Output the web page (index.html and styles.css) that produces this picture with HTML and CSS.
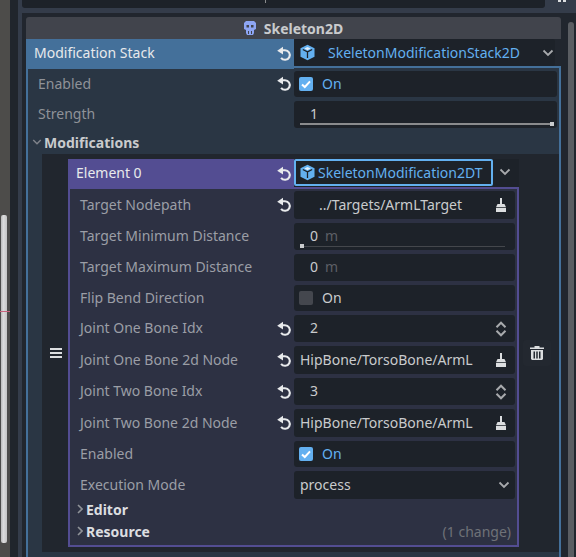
FILE: index.html
```html
<!DOCTYPE html>
<html>
  <head>
    <meta name="viewport" content="width=device-width,initial-scale=1.0" />
    <title>Skeleton2D inspector</title>
    <link rel="stylesheet" href="styles.css">
  </head>
  <body>
    <svg class="defs" width="0" height="0">
      <symbol id="revert" viewBox="0 0 16 16">
        <path d="M6.500 4.200h2.500a4.800 4.800 0 1 1-3.900 7.600" fill="none" stroke="currentColor" stroke-width="2.100"/>
        <path d="M7 .8 1.200 4.800 7 8.600z" fill="currentColor"/>
      </symbol>
      <symbol id="cube" viewBox="0 0 16 16">
        <path d="M8 .8 14.600 4v8L8 15.200 1.400 12V4z" fill="#63b0f0"/>
        <path d="M3.600 5.200 8 7.400v5.800M12.400 5.200 8 7.400" fill="none" stroke="#1d2229" stroke-width="1.200"/>
        <path d="M8 2.800 11 4.300 8 5.800 5 4.300z" fill="#dfeffc"/>
      </symbol>
      <symbol id="check" viewBox="0 0 14 14">
        <rect width="14" height="14" rx="2" fill="#63b0f0"/>
        <path d="M3 7.400 5.800 10 11 4.400" fill="none" stroke="#fff" stroke-width="2"/>
      </symbol>
      <symbol id="broom" viewBox="0 0 12 14">
        <path d="M5 0h2v6H5z" fill="#dcdee0"/>
        <path d="M2.500 6h7L11 9.300H1z" fill="#dcdee0"/>
        <path d="M1 10h10v4H1z" fill="#dcdee0"/>
      </symbol>
      <symbol id="spin" viewBox="0 0 12 16">
        <path d="M1.500 6.300 6 1.700 10.500 6.300M1.500 9.700 6 14.300 10.500 9.700" fill="none" stroke="#a8aaad" stroke-width="2"/>
      </symbol>
      <symbol id="chev" viewBox="0 0 12 12">
        <path d="M1.500 3.500 6 8l4.500-4.500" fill="none" stroke="currentColor" stroke-width="1.800"/>
      </symbol>
    </svg>

    <div class="page">
      <div class="track">
        <div class="grabber"></div>
        <div class="tick"></div>
      </div>
      <div class="dock"></div>
      <div class="main">
        <div class="topbar">
          <div class="toptab"><i></i></div>
          <div class="marks"><i></i><i></i></div>
        </div>
        <div class="inspector">
          <div class="body">
            <div class="title">
              <svg class="skull" viewBox="0 0 12 14">
                <path d="M2 0h8l2 2v6l-2 1v3l-1 2H3l-1-2V9L0 8V2z" fill="#8da5f3"/>
                <path d="M2.500 4h2.500v2.500H2.500zM7 4h2.500v2.500H7zM4 10h1v3H4zM7 10h1v3H7z" fill="#41444c"/>
              </svg>
              <span>Skeleton2D</span>
            </div>

            <div class="head">
              <div class="head-label blue-bar">
                <span>Modification Stack</span>
                <svg class="revert"><use href="#revert"/></svg>
              </div>
              <div class="head-side blue-line">
                <div class="editor wide res-editor">
                  <svg class="cube"><use href="#cube"/></svg>
                  <span class="blue res-name">SkeletonModificationStack2D</span>
                  <svg class="chev"><use href="#chev"/></svg>
                </div>
              </div>
            </div>

            <div class="stack">
              <div class="row h26 first">
                <div class="label">Enabled</div>
                <svg class="revert"><use href="#revert"/></svg>
                <div class="editor">
                  <svg class="box"><use href="#check"/></svg>
                  <span class="blue on">On</span>
                </div>
              </div>
              <div class="row h27">
                <div class="label">Strength</div>
                <div class="editor num">
                  <span>1</span>
                  <div class="slider full"><i></i></div>
                </div>
              </div>

              <div class="section">
                <svg class="sec-chev"><use href="#chev"/></svg>
                <b>Modifications</b>
              </div>

              <div class="nested">
                <div class="handle">
                  <div class="burger"><i></i><i></i><i></i></div>
                </div>

                <div class="element">
                  <div class="head el-head">
                    <div class="head-label purple-bar">
                      <span>Element 0</span>
                      <svg class="revert"><use href="#revert"/></svg>
                    </div>
                    <div class="head-side purple-line">
                      <div class="editor focused">
                        <svg class="cube"><use href="#cube"/></svg>
                        <span class="blue">SkeletonModification2DT</span>
                      </div>
                      <svg class="chev el-chev"><use href="#chev"/></svg>
                    </div>
                  </div>

                  <div class="props">
                    <div class="row h28">
                      <div class="label">Target Nodepath</div>
                      <svg class="revert"><use href="#revert"/></svg>
                      <div class="editor path">
                        <span class="indent">../Targets/ArmLTarget</span>
                        <svg class="broom"><use href="#broom"/></svg>
                      </div>
                    </div>
                    <div class="row h27">
                      <div class="label">Target Minimum Distance</div>
                      <div class="editor num">
                        <span>0</span><em>m</em>
                        <div class="slider empty"><i></i></div>
                      </div>
                    </div>
                    <div class="row h27">
                      <div class="label">Target Maximum Distance</div>
                      <div class="editor num"><span>0</span><em>m</em></div>
                    </div>
                    <div class="row h26">
                      <div class="label">Flip Bend Direction</div>
                      <div class="editor">
                        <div class="box unchecked"></div>
                        <span class="on">On</span>
                      </div>
                    </div>
                    <div class="row h27">
                      <div class="label">Joint One Bone Idx</div>
                      <svg class="revert"><use href="#revert"/></svg>
                      <div class="editor num spinbox">
                        <span>2</span>
                        <svg class="spin"><use href="#spin"/></svg>
                      </div>
                    </div>
                    <div class="row h28">
                      <div class="label">Joint One Bone 2d Node</div>
                      <svg class="revert"><use href="#revert"/></svg>
                      <div class="editor path">
                        <span>HipBone/TorsoBone/ArmL</span>
                        <svg class="broom"><use href="#broom"/></svg>
                      </div>
                    </div>
                    <div class="row h27">
                      <div class="label">Joint Two Bone Idx</div>
                      <svg class="revert"><use href="#revert"/></svg>
                      <div class="editor num spinbox">
                        <span>3</span>
                        <svg class="spin"><use href="#spin"/></svg>
                      </div>
                    </div>
                    <div class="row h28">
                      <div class="label">Joint Two Bone 2d Node</div>
                      <svg class="revert"><use href="#revert"/></svg>
                      <div class="editor path">
                        <span>HipBone/TorsoBone/ArmL</span>
                        <svg class="broom"><use href="#broom"/></svg>
                      </div>
                    </div>
                    <div class="row h26">
                      <div class="label">Enabled</div>
                      <div class="editor">
                        <svg class="box"><use href="#check"/></svg>
                        <span class="blue on">On</span>
                      </div>
                    </div>
                    <div class="row h28">
                      <div class="label">Execution Mode</div>
                      <div class="editor path">
                        <span>process</span>
                        <svg class="chev select-chev"><use href="#chev"/></svg>
                      </div>
                    </div>
                  </div>

                  <div class="group first-group">
                    <svg class="sec-arrow" viewBox="0 0 6 10"><path d="M1 1l4 4-4 4" fill="none" stroke="#8f9298" stroke-width="1.600"/></svg>
                    <b>Editor</b>
                  </div>
                  <div class="group last-group">
                    <svg class="sec-arrow" viewBox="0 0 6 10"><path d="M1 1l4 4-4 4" fill="none" stroke="#8f9298" stroke-width="1.600"/></svg>
                    <b>Resource</b>
                    <span class="changes">(1 change)</span>
                  </div>
                </div>

                <div class="side">
                  <div class="trash-btn">
                    <svg class="trash" viewBox="0 0 14 14">
                      <path d="M4.500 0h5v1.500h4.500V3H0V1.500h4.500zM1 4h12v9l-1 1H2l-1-1zM3.500 5.500V12.500h1.500V5.500zM6.250 5.500V12.500h1.500V5.500zM9 5.500V12.500h1.500V5.500z" fill="#dcdee0" fill-rule="evenodd"/>
                    </svg>
                  </div>
                </div>
              </div>
            </div>
          </div>
          <div class="scrollbar"><div class="bar"></div></div>
        </div>
      </div>
    </div>
  </body>
</html>
```

FILE: styles.css
```css
body {
  margin: 0;
  background: #21262e;
  font-family: "Noto Sans", sans-serif;
  font-size: 14px;
  color: #c9cbcd;
  overflow: hidden;
}
b {
  font-weight: 700;
}
.defs {
  position: absolute;
}

.page {
  display: flex;
  height: 557px;
  overflow: hidden;
}
.track {
  position: relative;
  width: 10px;
  padding: 215px 3px 0 1px;
  box-sizing: border-box;
  background: #4d4c4a;
}
.grabber {
  height: 328px;
  border-radius: 2px;
  background: linear-gradient(90deg, #b9b9b9, #dcdcdc 40%, #c4c4c4);
}
.tick {
  position: absolute;
  left: 0;
  top: 311px;
  width: 10px;
  height: 1px;
  background: #c9637c;
}
.dock {
  width: 8px;
  background: #20252c;
}
.main {
  flex: 1;
  display: flex;
  flex-direction: column;
  padding-left: 4px;
  background: #343c4a;
}
.topbar {
  height: 8px;
  flex: none;
  display: flex;
  margin-bottom: 5px;
}
.toptab {
  flex: 1;
  padding-left: 243px;
  box-sizing: border-box;
  border-radius: 0 0 3px 3px;
  background: #1d2229;
}
.toptab i {
  display: block;
  width: 1px;
  height: 3px;
  background: #8a8b8d;
}
.marks {
  width: 31px;
  flex: none;
  display: flex;
  gap: 2px;
  padding-left: 13px;
  box-sizing: border-box;
}
.marks i {
  width: 3px;
  height: 2px;
  background: #dcdee0;
}
.inspector {
  flex: 1;
  display: flex;
  background: #21262e;
}
.body {
  width: 535px;
  flex: none;
  margin-left: 4px;
  padding-top: 4px;
}
.scrollbar {
  flex: 1;
  padding: 9px 2px 0 7px;
}
.bar {
  height: 540px;
  border-radius: 3px;
  background: #5a5d62;
}

.title {
  height: 22px;
  display: flex;
  align-items: center;
  justify-content: center;
  gap: 8px;
  border-radius: 3px 3px 0 0;
  background: #41444c;
  font-weight: 700;
  color: #c9cbcd;
}
.skull {
  width: 12px;
  height: 14px;
}

.head {
  display: flex;
  height: 30px;
}
.head-label {
  width: 268px;
  flex: none;
  display: flex;
  align-items: center;
  justify-content: space-between;
  padding: 0 2px 0 8px;
  box-sizing: border-box;
  color: #e8eaec;
}
.head-label span {
  padding-bottom: 4px;
}
.blue-bar {
  background: #44709a;
}
.purple-bar {
  background: #534d92;
}
.head-side {
  flex: 1;
  height: 29px;
  display: flex;
  box-sizing: border-box;
}
.blue-line {
  border-bottom: 2px solid #44709a;
}
.purple-line {
  height: 30px;
  align-items: flex-start;
  border-bottom: 2px solid #534d92;
  background: #1d2229;
}

.stack {
  border: solid #44709a;
  border-width: 0 2px;
  background: #2a3644;
  padding-top: 3px;
  margin-top: -1px;
  height: 490px;
}
.row {
  display: flex;
  align-items: center;
  margin-bottom: 4px;
  padding-right: 2px;
}
.h26 {
  height: 26px;
}
.h27 {
  height: 27px;
}
.h28 {
  height: 28px;
}
.label {
  flex: 1;
  padding: 0 0 2px 10px;
  color: #8f9298;
}
.props .label {
  color: #9b9ea6;
}
.revert {
  width: 16px;
  height: 16px;
  flex: none;
  margin-right: 2px;
  color: #e8eaec;
}
.head-label .revert {
  margin-right: 0;
}

.editor {
  position: relative;
  width: 221px;
  height: 100%;
  flex: none;
  display: flex;
  align-items: center;
  padding: 0 6px 0 5px;
  box-sizing: border-box;
  border-radius: 3px;
  background: #1d2229;
}
.editor span,
.editor em {
  padding-bottom: 2px;
}
.stack > .row .editor {
  width: 263px;
}
.wide {
  height: 27px;
  padding-right: 2px;
}
.res-editor {
  width: 261px;
}
.editor .res-name {
  margin-left: 12px;
  flex: 1;
  padding-bottom: 0;
}
.blue {
  color: #63b0f0;
}
.cube {
  width: 17px;
  height: 17px;
  flex: none;
}
.chev {
  width: 12px;
  height: 12px;
  flex: none;
  margin-right: 1px;
  color: #a8aaad;
}
.res-editor .chev {
  margin-right: -1px;
}
.select-chev {
  margin-right: -1px;
}
.box {
  width: 14px;
  height: 14px;
  flex: none;
}
.unchecked {
  border-radius: 2px;
  background: #44474e;
}
.on {
  margin-left: 9px;
}
.num > span {
  margin-left: 11px;
}
.num em {
  margin-left: 7px;
  font-style: normal;
  color: #5c5f65;
}
.path {
  justify-content: space-between;
  padding-left: 6px;
}
.spinbox {
  justify-content: space-between;
}
.indent {
  margin-left: 19px;
}
.broom {
  width: 12px;
  height: 14px;
  flex: none;
  margin-right: 2px;
}
.spin {
  width: 12px;
  height: 16px;
  flex: none;
  margin-right: 2px;
}
.slider {
  position: absolute;
  left: 6px;
  bottom: 3px;
  height: 1px;
}
.slider i {
  position: absolute;
  top: -1px;
  width: 4px;
  height: 4px;
}
.full {
  right: 4px;
  height: 2px;
  background: #8a8b8d;
}
.full i {
  right: -1px;
  background: #c9cbcd;
}
.empty {
  right: 10px;
  height: 1px;
  background: #44474c;
}
.empty i {
  left: 0;
  top: -2px;
  background: #c9cbcd;
}

.section {
  height: 26px;
  display: flex;
  align-items: center;
  padding: 2px 0 0 4px;
  margin-top: -4px;
  box-sizing: border-box;
  color: #c9cbcd;
}
.sec-chev {
  width: 10px;
  height: 10px;
  margin-right: 2px;
  color: #7f828a;
}

.nested {
  display: flex;
  align-items: flex-start;
  width: 517px;
  margin-left: 14px;
  padding-top: 5px;
  height: 398px;
  box-sizing: border-box;
  background: #21262e;
}
.handle {
  width: 26px;
  height: 388px;
  flex: none;
  display: flex;
  align-items: center;
  justify-content: center;
  padding-left: 2px;
  box-sizing: border-box;
}
.burger i {
  display: block;
  width: 12px;
  height: 2px;
  margin: 2px 0;
  background: #dcdee0;
}
.element {
  width: 451px;
  height: 388px;
  flex: none;
}
.el-head {
  height: 30px;
}
.el-head .head-label {
  width: 226px;
  padding-left: 8px;
}
.focused {
  width: 199px;
  height: 27px;
  padding: 0 3px;
  gap: 3px;
  border-radius: 2px;
  border: 2px solid #63b0f0;
}
.editor.focused span {
  padding-bottom: 0;
  margin-left: -1px;
}
.el-chev {
  margin: 7px 0 0 6px;
}
.props {
  height: 310px;
  border: solid #534d92;
  border-width: 0 2px;
  padding-top: 2px;
  box-sizing: border-box;
  background: #2d3143;
}
.group {
  display: flex;
  align-items: center;
  padding: 0 6px 0 7px;
  border: solid #534d92;
  border-width: 0 2px;
  background: #2d3143;
  color: #dcdee0;
}
.first-group {
  height: 20px;
  padding-bottom: 2px;
}
.last-group {
  height: 20px;
  padding-bottom: 4px;
  border-bottom-width: 2px;
}
.sec-arrow {
  width: 6px;
  height: 10px;
  margin-right: 3px;
}
.changes {
  margin-left: auto;
  color: #6f7278;
}
.side {
  flex: 1;
  height: 388px;
  display: flex;
  align-items: center;
  justify-content: center;
  padding-right: 4px;
}
.trash-btn {
  width: 28px;
  height: 26px;
  display: flex;
  align-items: center;
  justify-content: center;
  border-radius: 3px;
  background: #232830;
}
.trash {
  width: 14px;
  height: 14px;
}
```
